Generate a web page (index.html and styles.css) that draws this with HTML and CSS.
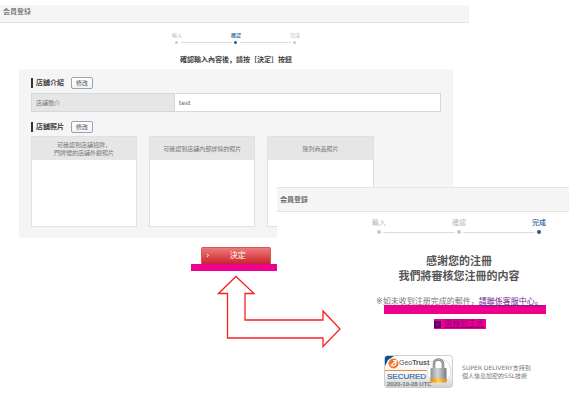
FILE: index.html
```html
<!DOCTYPE html>
<html lang="zh">
<head>
<meta charset="utf-8">
<title>会員登錄</title>
<link rel="stylesheet" href="styles.css">
</head>
<body>
<div class="flow">
  <section class="screen screen-confirm">
    <header class="bar">会員登錄</header>
    <ol class="steps">
      <li>輸入</li>
      <li class="current">確認</li>
      <li>完成</li>
    </ol>
    <h1 class="lead">確認輸入內容後，請按［決定］按鈕</h1>
    <div class="panel">
      <div class="section-head"><h2>店舖介紹</h2><button class="edit" type="button">修改</button></div>
      <table class="info">
        <tr><th scope="row">店舖簡介</th><td>test</td></tr>
      </table>
      <div class="section-head"><h2>店舖照片</h2><button class="edit" type="button">修改</button></div>
      <div class="photos">
        <div class="photo"><h3>可確認到店舖招牌，<br>門牌號的店舖外觀照片</h3></div>
        <div class="photo"><h3>可確認到店舖內部詳情的照片</h3></div>
        <div class="photo"><h3>陳列商品照片</h3></div>
      </div>
    </div>
    <div class="submit">
      <button class="decide" type="button"><span class="chevron">›</span><span>決定</span></button>
    </div>
  </section>

  <section class="screen screen-done">
    <header class="bar">会員登錄</header>
    <ol class="steps">
      <li>輸入</li>
      <li>確認</li>
      <li class="current">完成</li>
    </ol>
    <h1 class="thanks">感謝您的注冊<br>我們將審核您注冊的内容</h1>
    <p class="note">※如未收到注册完成的郵件，<a href="#contact">請聯係客服中心。</a></p>
    <div class="marker"></div>
    <a class="home" href="#home">
      <svg width="7" height="7" viewBox="0 0 7 7" aria-hidden="true"><rect width="7" height="7" fill="#5b0070"/><path d="M2.5 1.5 5 3.5 2.5 5.5z" fill="#c4008d"/></svg>
      <span>跳轉到主頁</span>
    </a>
    <footer class="secure">
      <svg class="seal" width="70" height="34" viewBox="0 0 70 34" role="img" aria-label="GeoTrust">
        <defs>
          <linearGradient id="face" x1="0" y1="0" x2="0" y2="1"><stop offset="0" stop-color="#fff"/><stop offset=".6" stop-color="#f7f7f7"/><stop offset="1" stop-color="#cfcfcf"/></linearGradient>
          <linearGradient id="steel" x1="0" y1="0" x2="1" y2="0"><stop offset="0" stop-color="#8e9297"/><stop offset=".45" stop-color="#d3d5d8"/><stop offset="1" stop-color="#777b80"/></linearGradient>
          <linearGradient id="gold" x1="0" y1="0" x2="1" y2="0"><stop offset="0" stop-color="#e58a12"/><stop offset=".5" stop-color="#ffd23c"/><stop offset="1" stop-color="#d98a14"/></linearGradient>
        </defs>
        <rect x=".5" y=".5" width="68" height="32" rx="3" fill="url(#face)" stroke="#cdcdcd"/>
        <path d="M1 11V3Q1 1 3 1H10L4 5Z" fill="#0b4f93"/>
        <circle cx="9.500" cy="8.500" r="5" fill="#f0782a"/>
        <path d="M6.500 9.500a3 3 0 0 0 5.500-1M8 9.500l4-3.500M9 5.500h3v3" fill="none" stroke="#fff" stroke-width="1.200"/>
        <path d="M1 15.500H43" stroke="#ef8a3a"/>
        <circle cx="55" cy="16" r="12" fill="#fff" stroke="#dedede"/>
        <path d="M50 15V9a4.500 4.500 0 0 1 9 0v6" fill="none" stroke="#777b80" stroke-width="2.600"/>
        <path d="M50 15V9a4.500 4.500 0 0 1 9 0v6" fill="none" stroke="#b9bcc0"/>
        <rect x="46.500" y="13" width="16" height="14" rx="1" fill="url(#steel)"/>
        <path d="M46.500 23.500h16V26q0 1.500-1.500 1.500H48q-1.500 0-1.500-1.500z" fill="url(#gold)"/>
        <text class="seal-name" x="15" y="10">Geo<tspan font-weight="700">Trust</tspan></text>
        <text class="seal-state" x="3" y="24">SECURED</text>
        <text class="seal-date" x="3" y="31">2020-10-28 UTC</text>
      </svg>
      <p>SUPER DELIVERY支持到<br>個人信息加密的SSL技術</p>
    </footer>
  </section>

  <svg class="arrow" width="124" height="73" viewBox="0 0 124 73" aria-hidden="true">
    <path d="M19 1.500 37 18.500H28V45H106V36L123 54 106 71.500V63H10.500V18.500H1.500Z" fill="#fff" stroke="#fb2020" stroke-width="1.300"/>
  </svg>
</div>
</body>
</html>
```
FILE: styles.css
```css
* { box-sizing: border-box; }

body {
  margin: 0;
  background: #fff;
  color: #555;
  font-family: "DejaVu Sans", "Noto Sans CJK JP", sans-serif;
  font-size: 6px;
  line-height: 8px;
}

h1, h2, h3, p, ol { margin: 0; padding: 0; }

button { font-family: inherit; padding: 0; }

.flow {
  position: relative;
  display: grid;
  align-items: start;
  padding-top: 5px;
}

.screen { grid-area: 1 / 1; background: #fff; }

.bar {
  display: flex;
  align-items: center;
  background: #f5f5f5;
  border-bottom: 1px solid #e4e4e4;
  padding: 0 3px;
  font-size: 7px;
}

.steps {
  display: flex;
  justify-content: center;
  list-style: none;
  color: #b8b8b8;
}

.steps li {
  position: relative;
  display: flex;
  flex: none;
  flex-direction: column;
  align-items: center;
}

.steps li::after {
  content: "";
  border-radius: 50%;
  background: #c8c8c8;
}

.steps li + li::before {
  content: "";
  position: absolute;
  right: calc(50% + 4px);
  width: calc(100% - 8px);
  height: 1px;
  background: #dcdcdc;
}

.steps .current { color: #2d6199; font-weight: 500; }
.steps .current::after { background: #1f5a9a; }

/* Confirmation screen */

.screen-confirm { width: 82.4%; }

.screen-confirm .bar { height: 18px; padding-bottom: 4px; }

.screen-confirm .steps { padding: 8px 0 0 3px; font-size: 5px; }
.screen-confirm .steps li { width: 59px; }
.screen-confirm .steps li::after { width: 3px; height: 3px; margin-top: 2px; }
.screen-confirm .steps li + li::before { bottom: 1px; }

.lead {
  margin: 12px 0 5px;
  padding-left: 3px;
  text-align: center;
  font-size: 7px;
  line-height: 8px;
  font-weight: 700;
  color: #444;
}

.panel {
  margin: 0 16px 0 19px;
  padding: 8px 12px 11px;
  background: #f5f5f5;
}

.section-head {
  display: flex;
  align-items: center;
  gap: 7px;
  margin-bottom: 4px;
}

.section-head h2 {
  border-left: 2px solid #333;
  padding-left: 3px;
  font-size: 7px;
  line-height: 10px;
  color: #444;
}

.edit {
  width: 22px;
  height: 12px;
  border: 1px solid #9aa3b5;
  border-radius: 2px;
  background: linear-gradient(#fff, #f1f3f7);
  color: #555;
  font-size: 6px;
  line-height: 8px;
}

.info {
  width: 100%;
  margin-bottom: 9px;
  border-collapse: collapse;
  table-layout: fixed;
  background: #fff;
}

.info th, .info td {
  height: 18px;
  padding: 0 4px;
  border: 1px solid #d8d8d8;
  text-align: left;
  font-weight: 400;
}

.info th { width: 35%; background: #e6e6e6; color: #777; }

.photos {
  display: grid;
  grid-template-columns: repeat(3, 1fr);
  gap: 12px;
  width: 83.6%;
  margin-top: -1px;
}

.photo {
  height: 91px;
  border: 1px solid #e0e0e0;
  background: #fff;
}

.photo h3 {
  display: flex;
  align-items: center;
  justify-content: center;
  height: 23px;
  background: #e6e6e6;
  color: #777;
  font-size: 6px;
  font-weight: 400;
  line-height: 8px;
  text-align: center;
}

.submit {
  width: 90px;
  margin: 9px 188px 0 auto;
  padding: 0 10px;
  border-bottom: 7px solid #ec008c;
}

.decide {
  display: grid;
  grid-template-columns: 8px 1fr 4px;
  align-items: center;
  width: 100%;
  height: 17px;
  padding: 0 2px;
  border: 1px solid #cf5a5c;
  border-bottom: 0;
  border-radius: 2px 2px 0 0;
  background: linear-gradient(#ee7a7a, #c9242b);
  color: #fff;
  font-size: 8px;
  line-height: 10px;
}

/* Completion screen */

.screen-done {
  z-index: 1;
  overflow: hidden;
  margin: 182px 0 0 48.7%;
  padding-bottom: 32px;
}

.screen-done .bar {
  height: 25px;
  border-top: 1px solid #e4e4e4;
  font-weight: 500;
}

.screen-done .steps {
  padding: 6px 0 0 72px;
  font-size: 7px;
  line-height: 10px;
}

.screen-done .steps li { width: 80px; }
.screen-done .steps li::after { width: 4px; height: 4px; margin-top: 2px; }
.screen-done .steps li + li::before { bottom: 1px; }

.thanks {
  margin-top: 20px;
  padding-left: 72px;
  text-align: center;
  font-size: 11px;
  line-height: 15px;
  color: #555;
}

.note {
  margin-top: 13px;
  padding-left: 99px;
  font-size: 8px;
  line-height: 10px;
  white-space: nowrap;
  color: #777;
}

.note a { color: #71268a; }

.marker {
  width: 162px;
  height: 9px;
  margin: -2px 0 5px 107px;
  background: #ec008c;
}

.home {
  display: flex;
  align-items: center;
  gap: 3px;
  width: 52px;
  height: 10px;
  margin-left: 157px;
  background: #ec008c;
  color: #98007e;
  font-size: 8px;
  line-height: 10px;
}

.home svg { flex: none; }

.secure {
  display: flex;
  align-items: center;
  gap: 8px;
  margin: 26px 0 0 107px;
  color: #777;
  white-space: nowrap;
}

.seal { flex: none; }
.seal-name { font: 7px "Liberation Sans", sans-serif; fill: #555; }
.seal-state { font: 8px "Liberation Sans", sans-serif; fill: #2f6ca6; stroke: #2f6ca6; stroke-width: 0.2px; }
.seal-date { font: 700 6px "Liberation Sans", sans-serif; fill: #777; }

/* Arrow linking the two screens */

.arrow {
  position: absolute;
  z-index: 2;
  top: 275px;
  left: 217px;
}
```
